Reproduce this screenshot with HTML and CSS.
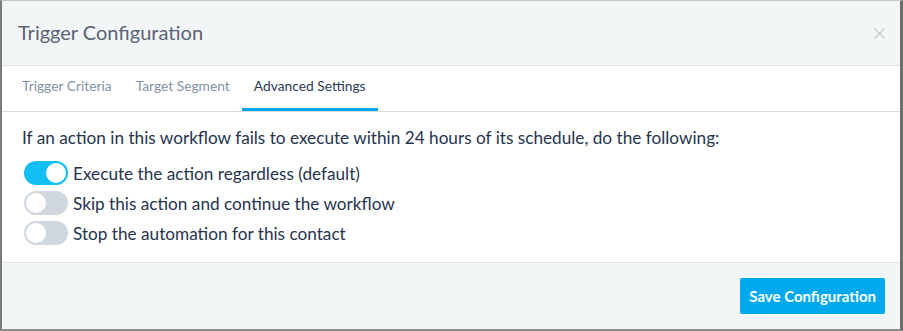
FILE: index.html
```html
<!DOCTYPE html>
<html lang="en">
<head>
  <meta charset="UTF-8" />
  <title>Trigger Configuration</title>
  <link rel="stylesheet" href="styles.css">
</head>
<body>
  <div class="modal">
    <header class="modal-header">
      <h2>Trigger Configuration</h2>
      <button class="close" aria-label="Close">
        <svg width="11" height="11" viewBox="0 0 11 11"><path d="M0.5 0.5 L10.5 10.5 M10.5 0.5 L0.5 10.5" stroke="#c8cbcd" stroke-width="1.3" fill="none"/></svg>
      </button>
    </header>
    <nav class="tabs">
      <a href="#">Trigger Criteria</a>
      <a href="#">Target Segment</a>
      <a href="#" class="active">Advanced Settings</a>
    </nav>
    <main class="modal-body">
      <p>If an action in this workflow fails to execute within 24 hours of its schedule, do the following:</p>
      <ul class="options">
        <li><span class="switch on"></span>Execute the action regardless (default)</li>
        <li><span class="switch"></span>Skip this action and continue the workflow</li>
        <li><span class="switch"></span>Stop the automation for this contact</li>
      </ul>
    </main>
    <footer class="modal-footer">
      <button class="save">Save Configuration</button>
    </footer>
  </div>
</body>
</html>
```

FILE: styles.css
```css
html, body {
  margin: 0; height: 100%; background: #fff;
}
body {
  font-family: Lato, "Open Sans", Arial, sans-serif; color: #26344f;
}
.modal {
  box-sizing: border-box; height: 331px;
  display: flex; flex-direction: column;
  border-top: 1px solid #c6c6c6; border-left: 2px solid #7b7b7b;
  border-right: 3px solid #6d6d6d; border-bottom: 2px solid #8a8a8a;
}
.modal-header {
  height: 64px; display: flex; align-items: center; justify-content: space-between;
  padding: 0 15px 0 16px; background: #f3f6f7; border-bottom: 1px solid #e1e4e6;
}
.modal-header h2 {
  margin: 0 0 2px; font-size: 20px; font-weight: normal; color: #5c6376;
}
.close {
  border: none; background: none; padding: 0; width: 11px; height: 11px;
  display: flex;
}
.tabs {
  height: 45px; display: flex; padding-left: 8px;
  border-bottom: 1px solid #d6dce2;
}
.tabs a {
  padding: 0 12px 4px; display: flex; align-items: center;
  font-size: 13.8px; color: #8292a7; text-decoration: none;
  border-bottom: 3px solid transparent; box-sizing: border-box;
}
.tabs a.active {
  color: #2b3b58; border-bottom-color: #00a7e8;
}
.modal-body {
  flex: 1; padding: 15px 20px 0 20px; border-bottom: 1px solid #e3e5e7;
}
.modal-body p {
  margin: 0 0 13px; font-size: 17.2px;
}
.options {
  list-style: none; margin: 0; padding: 0 0 0 2px;
  display: flex; flex-direction: column; gap: 6px;
}
.options li {
  display: flex; align-items: center; gap: 5px; font-size: 17.2px; height: 24px;
}
.switch {
  position: relative; width: 44px; height: 24px; border-radius: 12px;
  background: #d0d7de; flex-shrink: 0;
}
.switch::after {
  content: ""; position: absolute; top: 2px; left: 2px;
  width: 20px; height: 20px; border-radius: 50%; background: #fff;
}
.switch.on {
  background: #12bff3;
}
.switch.on::after {
  left: 22px;
}
.modal-footer {
  height: 66px; background: #f3f6f7;
  display: flex; align-items: center; justify-content: flex-end; padding-right: 15px;
}
.save {
  height: 36px; padding: 0 9px; border: none; border-radius: 2px;
  background: #00a9ee; color: #fff; font-family: inherit;
  font-size: 15px; font-weight: bold; cursor: pointer;
}
```
